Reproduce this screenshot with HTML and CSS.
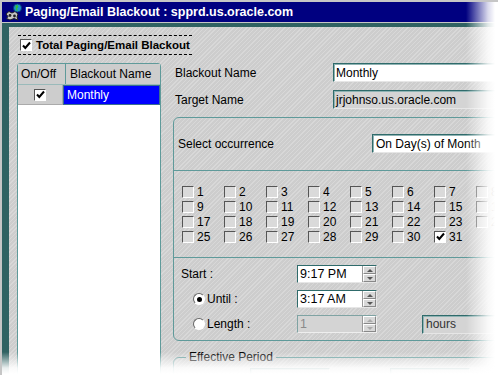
FILE: index.html
```html
<!DOCTYPE html>
<html lang="en">
<head>
    <meta charset="UTF-8">
    <meta name="viewport" content="width=device-width, initial-scale=1.0">
    <title>Paging/Email Blackout</title>
    <link rel="stylesheet" href="styles.css">
</head>
<body>
    <div class="window">
        <div class="titlebar">
            <svg class="app-icon" width="17" height="18" viewBox="0 0 17 18">
                <path d="M1 11 L4 8.5 L7 10 L10 8.5 L13 11 L12 14 L13 17 L9 15.5 L5 17 L1.5 15.5 L3 13.5 Z" fill="#c8c8c8" stroke="#222" stroke-width="1"/>
                <circle cx="5" cy="12.5" r="1.4" fill="#222"/>
                <circle cx="9.5" cy="13" r="1.4" fill="#222"/>
                <circle cx="12.5" cy="5" r="4" fill="#1f8fd8" stroke="#0a3d6b" stroke-width="0.8"/>
                <path d="M10.5 2.5 L12.5 2 L13.5 4 L12 5.5 L13 8 L10.8 7.2 Z" fill="#2fbf3a"/>
            </svg>
            <span>Paging/Email Blackout : spprd.us.oracle.com</span>
        </div>

        <div class="frame">
            <div class="total">
                <span class="check white">
                    <svg width="9" height="9" viewBox="0 0 9 9"><path d="M1 4.5 L3.3 7 L8 1.5" fill="none" stroke="#000" stroke-width="2"/></svg>
                </span>
                Total Paging/Email Blackout
            </div>

            <div class="main">
                <div class="list">
                    <div class="list-head">
                        <div class="col-on">On/Off</div>
                        <div class="col-name">Blackout Name</div>
                    </div>
                    <div class="list-row">
                        <div class="col-on">
                            <span class="check white">
                                <svg width="9" height="9" viewBox="0 0 9 9"><path d="M1 4.5 L3.3 7 L8 1.5" fill="none" stroke="#000" stroke-width="2"/></svg>
                            </span>
                        </div>
                        <div class="col-name selected">Monthly</div>
                    </div>
                </div>

                <div class="form">
                    <div class="field">
                        <span class="label">Blackout Name</span>
                        <span class="input">Monthly</span>
                    </div>
                    <div class="field">
                        <span class="label">Target Name</span>
                        <span class="input readonly">jrjohnso.us.oracle.com</span>
                    </div>

                    <div class="group">
                        <div class="occ-row">
                            <span class="occ-label">Select occurrence</span>
                            <span class="select">On Day(s) of Month</span>
                        </div>
                        <div class="sep"></div>
                        <div class="days">
                            <span class="day"><span class="check"></span>1</span>
                            <span class="day"><span class="check"></span>2</span>
                            <span class="day"><span class="check"></span>3</span>
                            <span class="day"><span class="check"></span>4</span>
                            <span class="day"><span class="check"></span>5</span>
                            <span class="day"><span class="check"></span>6</span>
                            <span class="day"><span class="check"></span>7</span>
                            <span class="day"><span class="check"></span>8</span>
                            <span class="day"><span class="check"></span>9</span>
                            <span class="day"><span class="check"></span>10</span>
                            <span class="day"><span class="check"></span>11</span>
                            <span class="day"><span class="check"></span>12</span>
                            <span class="day"><span class="check"></span>13</span>
                            <span class="day"><span class="check"></span>14</span>
                            <span class="day"><span class="check"></span>15</span>
                            <span class="day"><span class="check"></span>16</span>
                            <span class="day"><span class="check"></span>17</span>
                            <span class="day"><span class="check"></span>18</span>
                            <span class="day"><span class="check"></span>19</span>
                            <span class="day"><span class="check"></span>20</span>
                            <span class="day"><span class="check"></span>21</span>
                            <span class="day"><span class="check"></span>22</span>
                            <span class="day"><span class="check"></span>23</span>
                            <span class="day"><span class="check"></span>24</span>
                            <span class="day"><span class="check"></span>25</span>
                            <span class="day"><span class="check"></span>26</span>
                            <span class="day"><span class="check"></span>27</span>
                            <span class="day"><span class="check"></span>28</span>
                            <span class="day"><span class="check"></span>29</span>
                            <span class="day"><span class="check"></span>30</span>
                            <span class="day"><span class="check white">
                                <svg width="9" height="9" viewBox="0 0 9 9"><path d="M1 4.5 L3.3 7 L8 1.5" fill="none" stroke="#000" stroke-width="2"/></svg>
                            </span>31</span>
                        </div>
                        <div class="sep"></div>
                        <div class="times">
                            <div class="time-row">
                                <span class="time-label">Start :</span>
                                <span class="spinner">
                                    <span class="spin-text">9:17 PM</span>
                                    <span class="spin-btns"><span class="up"></span><span class="down"></span></span>
                                </span>
                            </div>
                            <div class="time-row">
                                <span class="time-label"><span class="radio on"></span>Until :</span>
                                <span class="spinner">
                                    <span class="spin-text">3:17 AM</span>
                                    <span class="spin-btns"><span class="up"></span><span class="down"></span></span>
                                </span>
                            </div>
                            <div class="time-row">
                                <span class="time-label"><span class="radio"></span>Length :</span>
                                <span class="spinner disabled">
                                    <span class="spin-text">1</span>
                                    <span class="spin-btns"><span class="up"></span><span class="down"></span></span>
                                </span>
                                <span class="select units">hours</span>
                            </div>
                        </div>
                    </div>

                    <fieldset class="period">
                        <legend>Effective Period</legend>
                        <div class="period-row">
                            <span class="input small"></span>
                            <span class="input small"></span>
                            <span class="check"></span>
                            <span class="input small"></span>
                        </div>
                    </fieldset>
                </div>
            </div>
        </div>
    </div>
</body>
</html>
```

FILE: styles.css
```css
body {
    margin: 0;
    background: #fff;
    font-family: "Liberation Sans", Arial, sans-serif;
    font-size: 12px;
    color: #000;
    overflow: hidden;
}
.window {
    position: relative;
    box-sizing: border-box;
    width: 560px;
    height: 375px;
    border-top: 2px solid #c6c6c6;
    border-left: 2px solid #c6c6c6;
    background: #c6c6c6;
    display: flex;
    flex-direction: column;
    overflow: hidden;
}
.window::after {
    content: "";
    position: absolute;
    top: -2px;
    left: -2px;
    width: 498px;
    height: 375px;
    background:
        linear-gradient(to right, rgba(255, 255, 255, 0) 466px, rgba(255, 255, 255, 0.85) 488px, #fff 495px),
        linear-gradient(to bottom, rgba(255, 255, 255, 0) 352px, rgba(255, 255, 255, 0.9) 368px, #fff 374px);
    pointer-events: none;
}
.titlebar {
    height: 20px;
    flex: none;
    background: #000080;
    color: #fff;
    display: flex;
    align-items: center;
    gap: 3px;
    padding-left: 3px;
    font-weight: bold;
    font-size: 12.5px;
    white-space: nowrap;
}
.app-icon {
    flex: none;
}
.frame {
    flex: 1;
    margin-top: 1px;
    border-top: 4px solid #2f6262;
    border-left: 7px solid #2f6262;
    padding: 8px 0 0 8px;
    background-color: #cdcdcd;
    background-image: repeating-linear-gradient(135deg, rgba(255, 255, 255, 0.22) 0 1px, rgba(0, 0, 0, 0) 1px 3px);
    display: flex;
    flex-direction: column;
}

/* checkboxes */
.check {
    box-sizing: border-box;
    display: inline-flex;
    align-items: center;
    justify-content: center;
    flex: none;
    width: 12px;
    height: 12px;
    border: 1px solid;
    border-color: #555 #fff #fff #555;
    background: #dadada;
}
.check.white {
    background: #fff;
}

.total {
    align-self: flex-start;
    display: flex;
    align-items: center;
    gap: 4px;
    height: 18px;
    margin-left: 1px;
    padding: 0 2px;
    border-top: 1px dashed #000;
    border-bottom: 1px dashed #000;
    font-weight: bold;
    font-size: 11.5px;
    white-space: nowrap;
}
.main {
    flex: 1;
    display: flex;
    margin-top: 8px;
}

/* list */
.list {
    box-sizing: border-box;
    width: 144px;
    flex: none;
    background: #fff;
    border: 1px solid #5f9a9a;
    border-radius: 3px 3px 0 0;
}
.list-head, .list-row {
    display: flex;
    height: 20px;
}
.list-head {
    background: #cdcdcd;
    border-bottom: 1px solid #9ababa;
}
.list-head div, .list-row div {
    display: flex;
    align-items: center;
}
.col-on {
    width: 44px;
    padding-left: 3px;
    border-right: 1px solid #5f9a9a;
}
.col-name {
    flex: 1;
    padding-left: 4px;
}
.list-row .col-on {
    background: #cdcdcd;
    justify-content: center;
    padding-left: 0;
    border-right: 1px solid #aaa;
    border-bottom: 1px solid #aaa;
}
.col-name.selected {
    background: #0000ff;
    color: #fff;
    border: 1px solid #3a6f8f;
    padding-left: 3px;
}

/* form */
.form {
    flex: 1;
    padding-left: 12px;
    display: flex;
    flex-direction: column;
}
.field {
    display: flex;
    align-items: center;
    height: 19px;
    margin-bottom: 8px;
    white-space: nowrap;
}
.label {
    width: 158px;
    padding-left: 2px;
}
.input, .select {
    box-sizing: border-box;
    display: flex;
    align-items: center;
    height: 19px;
    width: 200px;
    padding-left: 2px;
    background: #fff;
    border: 1px solid;
    border-color: #2f6b6b #e6e6e6 #e6e6e6 #2f6b6b;
    box-shadow: inset 1px 1px 0 #8fb3b3;
    white-space: nowrap;
}
.input.readonly {
    background: #d4d4d4;
}
.input.small {
    width: 80px;
    background: #d4d4d4;
}

.group {
    box-sizing: border-box;
    width: 400px;
    border: 1px solid #5f9a9a;
    border-radius: 6px;
    padding: 16px 0 7px;
}
.occ-row {
    display: flex;
    align-items: center;
    height: 19px;
}
.occ-label {
    width: 194px;
    padding-left: 4px;
}
.select {
    width: 160px;
    padding-left: 3px;
}
.sep {
    height: 1px;
    background: #5f9a9a;
}
.occ-row + .sep {
    margin-top: 17px;
}
.days {
    display: grid;
    grid-template-columns: repeat(8, 42px);
    grid-auto-rows: 15px;
    padding: 13px 0 13px 8px;
}
.day {
    display: flex;
    align-items: center;
    gap: 3px;
}

.times {
    padding: 7px 0 0 7px;
    display: flex;
    flex-direction: column;
    gap: 7px;
}
.time-row {
    display: flex;
    align-items: center;
    height: 18px;
}
.time-label {
    display: flex;
    align-items: center;
    width: 116px;
    white-space: nowrap;
}
.radio {
    box-sizing: border-box;
    width: 12px;
    height: 12px;
    margin: 0 2px 0 12px;
    border-radius: 50%;
    border: 1px solid;
    border-color: #666 #fff #fff #666;
    background: #fff;
    display: flex;
    align-items: center;
    justify-content: center;
}
.radio.on::after {
    content: "";
    width: 5px;
    height: 5px;
    border-radius: 50%;
    background: #000;
}
.spinner {
    box-sizing: border-box;
    display: flex;
    width: 80px;
    height: 18px;
    border: 1px solid;
    border-color: #2f6b6b #e6e6e6 #e6e6e6 #2f6b6b;
    background: #fff;
}
.spin-text {
    flex: 1;
    display: flex;
    align-items: center;
    padding-left: 2px;
    font-size: 12.5px;
}
.spin-btns {
    width: 13px;
    display: flex;
    flex-direction: column;
    border-left: 1px solid #999;
}
.spin-btns span {
    flex: 1;
    background: #d8d8d8;
    border: 1px solid;
    border-color: #fff #888 #888 #fff;
    display: flex;
    align-items: center;
    justify-content: center;
}
.spin-btns .up::after {
    content: "";
    border: 3px solid transparent;
    border-bottom: 3px solid #555;
    border-top: 0;
}
.spin-btns .down::after {
    content: "";
    border: 3px solid transparent;
    border-top: 3px solid #555;
    border-bottom: 0;
}
.spinner.disabled {
    background: #d4d4d4;
    border-color: #7fa3a3 #eee #eee #7fa3a3;
}
.spinner.disabled .spin-text {
    color: #8a8a8a;
}
.spinner.disabled .spin-btns .up::after {
    border-bottom-color: #aaa;
}
.spinner.disabled .spin-btns .down::after {
    border-top-color: #aaa;
}
.select.units {
    margin-left: 45px;
    width: 100px;
    background: #d4d4d4;
    color: #333;
}

.period {
    box-sizing: border-box;
    width: 400px;
    margin: 9px 0 0;
    padding: 4px 0 0 12px;
    border: 1px solid #5f9a9a;
    border-radius: 6px;
}
.period legend {
    padding: 0 3px;
}
.period-row {
    display: flex;
    align-items: center;
    gap: 60px;
    padding-left: 64px;
}
```
